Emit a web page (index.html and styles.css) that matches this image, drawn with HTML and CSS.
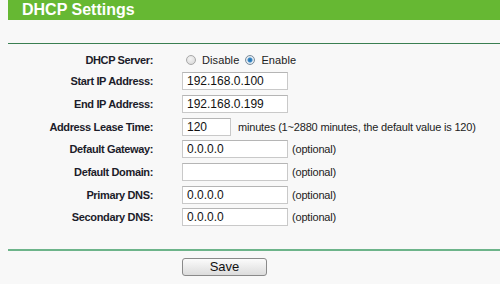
FILE: index.html
```html
<!DOCTYPE html>
<html lang="en">
<head>
    <meta charset="UTF-8">
    <meta name="viewport" content="width=device-width, initial-scale=1.0">
    <title>DHCP Settings</title>
    <link rel="stylesheet" href="styles.css">
</head>
<body>
    <div class="title-bar">DHCP Settings</div>
    <form class="dhcp-form">
        <div class="rows">
            <label class="row-label">DHCP Server:</label>
            <div class="row-field">
                <input type="radio" name="server" id="srv-off" class="radio">
                <label for="srv-off" class="radio-text">Disable</label>
                <input type="radio" name="server" id="srv-on" class="radio" checked>
                <label for="srv-on" class="radio-text">Enable</label>
            </div>

            <label class="row-label" for="start_ip">Start IP Address:</label>
            <div class="row-field"><input type="text" id="start_ip" class="text-box" value="192.168.0.100"></div>

            <label class="row-label" for="end_ip">End IP Address:</label>
            <div class="row-field"><input type="text" id="end_ip" class="text-box" value="192.168.0.199"></div>

            <label class="row-label" for="lease">Address Lease Time:</label>
            <div class="row-field"><input type="text" id="lease" class="text-box short" value="120"><span class="hint">minutes (1~2880 minutes, the default value is 120)</span></div>

            <label class="row-label" for="gateway">Default Gateway:</label>
            <div class="row-field"><input type="text" id="gateway" class="text-box" value="0.0.0.0"><span class="hint">(optional)</span></div>

            <label class="row-label" for="domain">Default Domain:</label>
            <div class="row-field"><input type="text" id="domain" class="text-box" value=""><span class="hint">(optional)</span></div>

            <label class="row-label" for="dns1">Primary DNS:</label>
            <div class="row-field"><input type="text" id="dns1" class="text-box" value="0.0.0.0"><span class="hint">(optional)</span></div>

            <label class="row-label" for="dns2">Secondary DNS:</label>
            <div class="row-field"><input type="text" id="dns2" class="text-box" value="0.0.0.0"><span class="hint">(optional)</span></div>
        </div>
        <div class="actions">
            <button type="button" class="save-button">Save</button>
        </div>
    </form>
</body>
</html>
```

FILE: styles.css
```css
body {
    margin: 0 0 0 8px;
    background: #f8f8f8;
    font-family: "Liberation Sans", Arial, sans-serif;
    font-size: 11px;
    color: #222;
}
.title-bar {
    height: 20px;
    line-height: 20px;
    padding-left: 14px;
    background: #66b833;
    color: #fff;
    font-size: 16px;
    font-weight: bold;
}
.dhcp-form {
    margin-top: 23px;
    border-top: 1px solid #3a7f52;
}
.rows {
    display: grid;
    grid-template-columns: 145px 1fr;
    grid-template-rows: 20px repeat(7, 22.67px);
    column-gap: 29px;
    padding-top: 6px;
    padding-bottom: 20px;
    border-bottom: 2px solid #6db48a;
}
.row-label {
    display: flex;
    align-items: center;
    justify-content: flex-end;
    font-weight: bold;
    letter-spacing: -0.36px;
    color: #1c1c2a;
}
.row-field {
    display: flex;
    align-items: center;
}
.text-box {
    box-sizing: border-box;
    width: 106px;
    height: 18px;
    margin: 0;
    padding: 0 4px;
    border: 1px solid #c9c9c9;
    border-top-color: #b5b5b5;
    background: #fff;
    font-family: inherit;
    font-size: 12px;
    color: #111;
}
.text-box.short {
    width: 49px;
}
.hint {
    margin-left: 4px;
    letter-spacing: -0.18px;
    color: #222;
}
.text-box.short + .hint {
    margin-left: 7px;
}
.radio {
    appearance: none;
    box-sizing: border-box;
    width: 10px;
    height: 10px;
    margin: 0 0 0 4px;
    border: 1px solid #a8a8a8;
    border-radius: 50%;
    background: radial-gradient(circle at 40% 35%, #f4f4f4 0%, #d4d4d4 100%);
}
.radio:checked {
    border-color: #7b8d9c;
    background: radial-gradient(circle, #1f6aa8 0, #3c8bc8 2px, #e8eef4 3px, #cdd6de 100%);
}
.radio-text {
    margin: 0 2px 0 6px;
    font-size: 11px;
    letter-spacing: 0.1px;
}
.actions {
    padding: 7px 0 0 174px;
}
.save-button {
    width: 85px;
    height: 18px;
    padding: 0;
    border: 1px solid #8a8a8a;
    border-radius: 3px;
    background: linear-gradient(#fbfbfb, #dcdcdc);
    font-family: inherit;
    font-size: 13px;
    color: #111;
}
```
